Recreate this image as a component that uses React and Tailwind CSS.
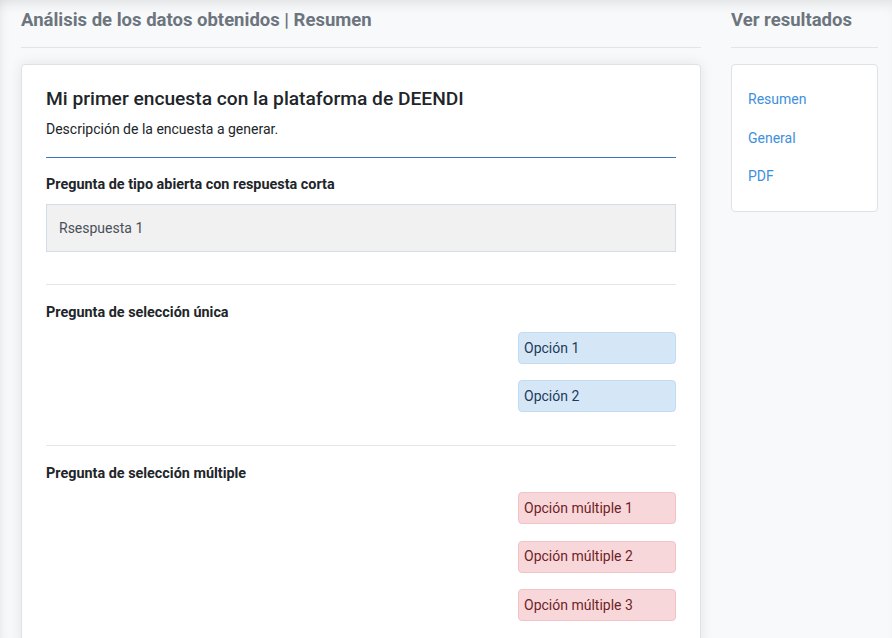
import React from "react";

export default function App() {
  const font = { fontFamily: "Roboto, 'Liberation Sans', sans-serif" };
  return (
    <div
      style={font}
      className="min-h-[638px] bg-[#f8f9fa] shadow-[inset_0_10px_14px_-8px_rgba(0,0,0,0.12),inset_10px_0_12px_-10px_rgba(0,0,0,0.07)] px-[21px] flex gap-[30px] overflow-hidden h-[638px]"
    >
      {/* Left column */}
      <div className="w-[680px] shrink-0">
        <div className="h-[48px] border-b border-[#e2e5e8] pt-[8px]">
          <h2 className="text-[18.5px] leading-[24px] font-bold text-[#6c757d]">
            Análisis de los datos obtenidos | Resumen
          </h2>
        </div>
        <div className="mt-[16px] bg-white border border-[#dee2e6] rounded-[4px] shadow-[0_0_14px_rgba(0,0,0,0.09)] px-[24px] pt-[23px] pb-[24px]">
          <h1 className="text-[19.2px] leading-[22px] font-medium text-[#212529]">
            Mi primer encuesta con la plataforma de DEENDI
          </h1>
          <p className="mt-[9px] text-[14px] leading-[20px] text-[#212529]">
            Descripción de la encuesta a generar.
          </p>
          <div className="mt-[18px] h-px bg-[#3a77b3]" />

          <h3 className="mt-[17px] text-[14.4px] leading-[20px] font-bold text-[#212529]">
            Pregunta de tipo abierta con respuesta corta
          </h3>
          <div className="mt-[9px] h-[48px] bg-[#f1f1f1] border border-[#d2dde9] flex items-center px-[12px] text-[14px] text-[#495057]">
            Rsespuesta 1
          </div>

          <div className="mt-[32px] h-px bg-[#e5e5e5]" />

          <h3 className="mt-[18px] text-[14.4px] leading-[20px] font-bold text-[#212529]">
            Pregunta de selección única
          </h3>
          <div className="mt-[9px] flex flex-col items-end gap-[16px]">
            {["Opción 1", "Opción 2"].map((t) => (
              <div
                key={t}
                className="w-[158px] h-[32px] bg-[#d5e7f7] border border-[#bfdcf3] rounded-[4px] flex items-center px-[5px] text-[14px] text-[#1d3a5c]"
              >
                {t}
              </div>
            ))}
          </div>

          <div className="mt-[33px] h-px bg-[#e5e5e5]" />

          <h3 className="mt-[18px] text-[14.4px] leading-[20px] font-bold text-[#212529]">
            Pregunta de selección múltiple
          </h3>
          <div className="mt-[8px] flex flex-col items-end gap-[16.5px]">
            {["Opción múltiple 1", "Opción múltiple 2", "Opción múltiple 3"].map((t) => (
              <div
                key={t}
                className="w-[158px] h-[32px] bg-[#f8d7da] border border-[#f3c1c6] rounded-[4px] flex items-center px-[5px] text-[14px] text-[#6e1f26]"
              >
                {t}
              </div>
            ))}
          </div>
        </div>
      </div>

      {/* Right column */}
      <div className="w-[147px] shrink-0">
        <div className="h-[48px] border-b border-[#e2e5e8] pt-[8px]">
          <h2 className="text-[18.5px] leading-[24px] font-bold text-[#6c757d]">
            Ver resultados
          </h2>
        </div>
        <div className="mt-[16px] bg-white border border-[#dee2e6] rounded-[4px] px-[16px] pt-[24px] pb-[25px] flex flex-col gap-[18.5px]">
          {["Resumen", "General", "PDF"].map((t) => (
            <a key={t} className="text-[14px] leading-[20px] text-[#3e8fdc] cursor-pointer">
              {t}
            </a>
          ))}
        </div>
      </div>
    </div>
  );
}
